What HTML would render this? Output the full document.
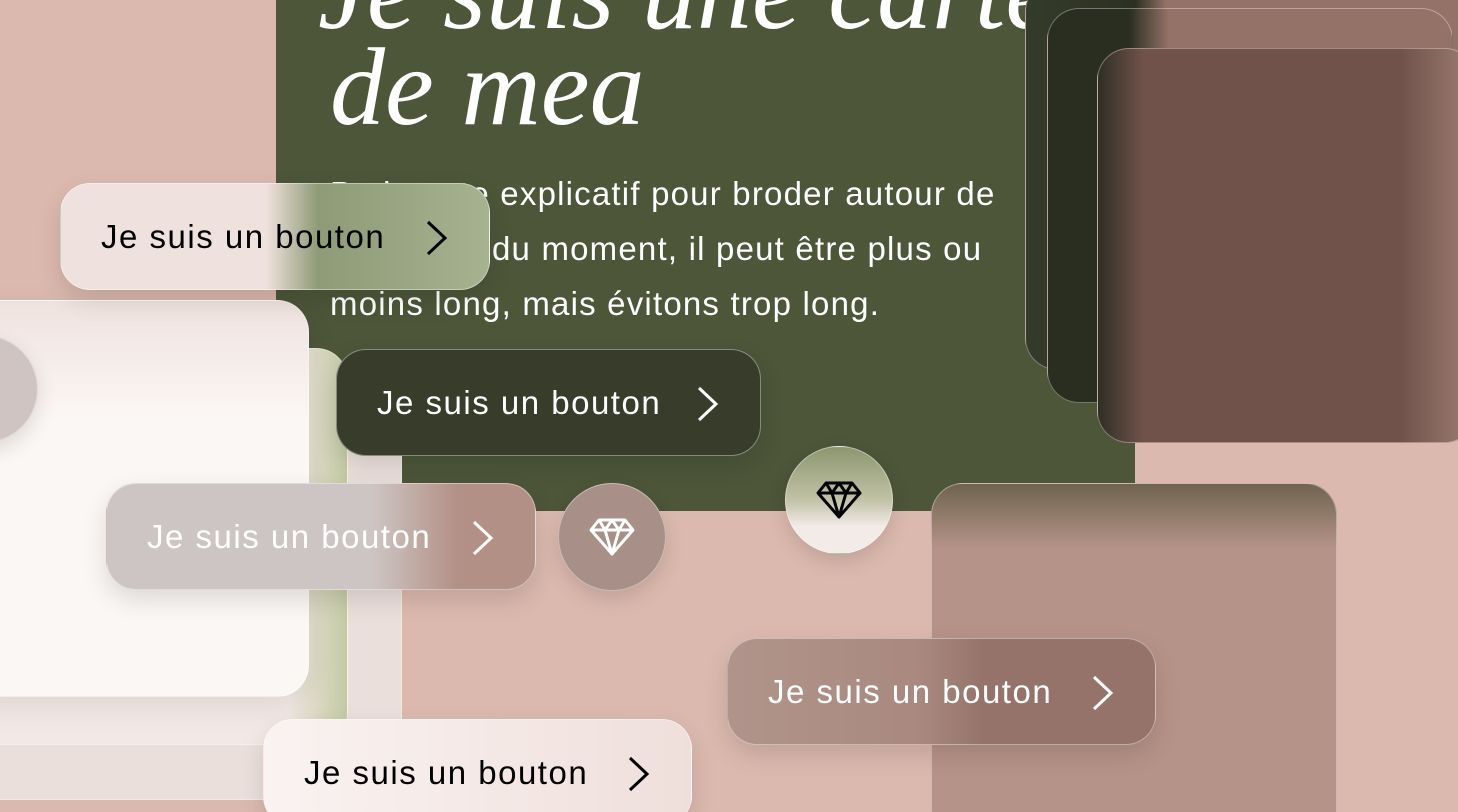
<!DOCTYPE html>
<html><head><style>
*{margin:0;padding:0;box-sizing:border-box}
html,body{width:1458px;height:812px;overflow:hidden}
body{background:#dbb9ae;position:relative;font-family:"Liberation Sans",sans-serif}
.a{position:absolute}
.btn{position:absolute;width:430px;height:107px;border-radius:30px;font-size:33px;letter-spacing:1.5px;display:flex;align-items:center;padding-left:40px;box-shadow:0 10px 25px rgba(0,0,0,.12);border:1px solid rgba(255,255,255,.4)}
.btn svg{position:absolute;right:40px;top:36px}
.card{position:absolute;border-radius:32px;border:1.5px solid rgba(255,255,255,.35)}
.circ{position:absolute;width:108px;height:108px;border-radius:50%;display:flex;align-items:center;justify-content:center;box-shadow:0 8px 20px rgba(0,0,0,.12);border:1px solid rgba(255,255,255,.4)}
</style></head><body>
<div class="a" style="left:318px;top:0;width:817px;height:511px;background:#4d5639;left:276px;width:859px"></div>
<div class="a" style="left:318px;top:-57px;font-family:'Liberation Serif',serif;font-style:italic;color:#fff;font-size:110px;line-height:96px;white-space:nowrap">Je suis une carte<br><span style="padding-left:12px">de mea</span></div>
<div class="a" style="left:330px;top:166px;width:700px;color:#fff;font-size:33px;letter-spacing:1.2px;line-height:55px">Petit texte explicatif pour broder autour de l'intention du moment, il peut être plus ou moins long, mais évitons trop long.</div>

<div class="card" style="left:1025px;top:-20px;width:440px;height:390px;background:linear-gradient(90deg,#353b2a 0,#2c3022 25%,#957268 32%,#957268 100%)"></div>
<div class="card" style="left:1047px;top:8px;width:406px;height:395px;background:linear-gradient(90deg,#2a2e20 0,#2a2e20 20%,#957268 30%,#957268 100%)"></div>
<div class="card" style="left:1097px;top:48px;width:380px;height:395px;background:linear-gradient(90deg,#2f2f24 0,#70524b 12%,#70524b 80%,#9f7f74 100%)"></div>

<div class="card" style="left:931px;top:483px;width:406px;height:360px;background:linear-gradient(180deg,#6e6450 0,#b69388 18%,#b69388 100%)"></div>

<div class="card" style="left:-40px;top:405px;width:442px;height:395px;background:#ebdfdb"></div>
<div class="card" style="left:-40px;top:348px;width:388px;height:397px;background:linear-gradient(90deg,#f2e8e5 85%,#c3caa2 100%)"></div>
<div class="card" style="left:-40px;top:300px;width:349px;height:397px;background:linear-gradient(180deg,#efe2de 0,#fbf7f5 30%,#fbf7f5 100%);box-shadow:0 10px 30px rgba(0,0,0,.08)"></div>
<div class="circ" style="left:-70px;top:335px;background:#cfc4c1"></div>

<div class="btn" style="left:60px;top:183px;background:linear-gradient(90deg,#efe1dd 0,#efe1dd 48%,#8f9b77 60%,#a6b290 100%);color:#000">Je suis un bouton<svg width="24" height="36" viewBox="0 0 24 36"><path d="M3 2l17 16L3 34" fill="none" stroke="#000" stroke-width="3"/></svg></div>
<div class="btn" style="left:336px;top:349px;width:425px;background:#383d2b;color:#fff">Je suis un bouton<svg width="24" height="36" viewBox="0 0 24 36"><path d="M3 2l17 16L3 34" fill="none" stroke="#fff" stroke-width="3"/></svg></div>
<div class="btn" style="left:106px;top:483px;background:linear-gradient(90deg,#cdc5c3 0,#cdc5c3 62%,#b39086 82%,#b39086 100%);color:#fff">Je suis un bouton<svg width="24" height="36" viewBox="0 0 24 36"><path d="M3 2l17 16L3 34" fill="none" stroke="#fff" stroke-width="3"/></svg></div>
<div class="circ" style="left:558px;top:483px;background:#a88f88"><svg width="46" height="40" viewBox="0 0 46 40"><path d="M10 3h26l8 10L23 37 2 13zM2 13h42M16 13l7 24 7-24M10 3l6 10 7-10 7 10 6-10" fill="none" stroke="#fff" stroke-width="3" stroke-linejoin="round"/></svg></div>
<div class="circ" style="left:785px;top:446px;background:linear-gradient(180deg,#8d9670 0,#c1c2a6 50%,#f2ebe8 75%)"><svg width="46" height="40" viewBox="0 0 46 40"><path d="M10 3h26l8 10L23 37 2 13zM2 13h42M16 13l7 24 7-24M10 3l6 10 7-10 7 10 6-10" fill="none" stroke="#000" stroke-width="3" stroke-linejoin="round"/></svg></div>
<div class="btn" style="left:727px;top:638px;width:429px;background:linear-gradient(90deg,#b0948b 0,#a9897f 45%,#95736a 60%,#95736a 100%);color:#fff">Je suis un bouton<svg width="24" height="36" viewBox="0 0 24 36"><path d="M3 2l17 16L3 34" fill="none" stroke="#fff" stroke-width="3"/></svg></div>
<div class="btn" style="left:263px;top:719px;width:429px;background:linear-gradient(90deg,#faf3f1,#efdfdb);color:#000">Je suis un bouton<svg width="24" height="36" viewBox="0 0 24 36"><path d="M3 2l17 16L3 34" fill="none" stroke="#000" stroke-width="3"/></svg></div>
</body></html>
